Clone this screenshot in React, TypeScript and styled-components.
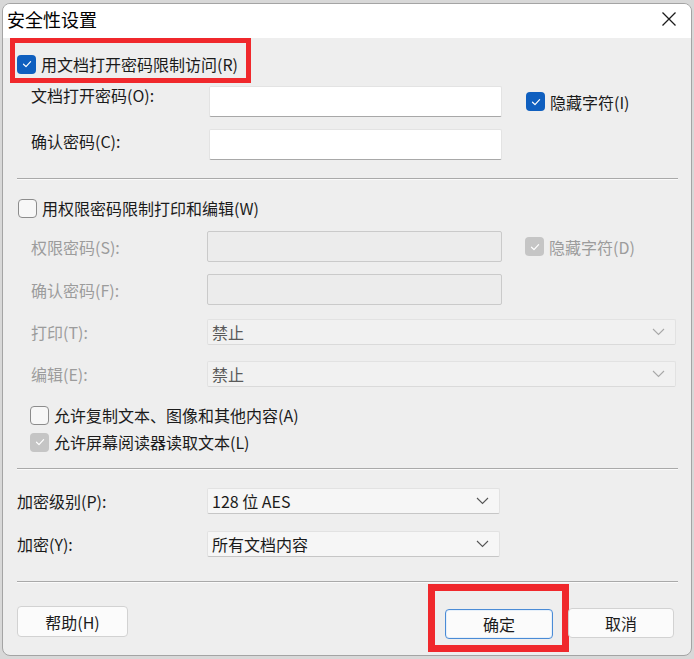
import React from "react";
import styled, { createGlobalStyle, css } from "styled-components";

const GlobalStyle = createGlobalStyle`
  html, body { margin: 0; padding: 0; }
  body {
    width: 694px;
    height: 659px;
    overflow: hidden;
    background: #d8d8d8;
    font-family: "Noto Sans CJK SC", "Microsoft YaHei", sans-serif;
    color: #1b1b1b;
  }
`;

const Window = styled.div`
  box-sizing: border-box;
  margin: 3px 0 0 2px;
  width: 690px;
  height: 653px;
  border: 1px solid #a4a4a4;
  border-radius: 8px;
  background: #eeeeee;
  overflow: hidden;
  display: flex;
  flex-direction: column;
`;

const TitleBar = styled.div`
  box-sizing: border-box;
  flex-shrink: 0;
  height: 34px;
  background: #ffffff;
  display: flex;
  align-items: center;
  justify-content: space-between;
  padding: 0 14px 5px 4px;
`;

const Title = styled.span`
  font-size: 18px;
  color: #000;
`;

const CloseIcon = styled.svg`
  width: 16px;
  height: 16px;
`;

const Body = styled.div`
  flex: 1;
  display: flex;
  flex-direction: column;
  padding: 0 13px 0 14px;
`;

/* red annotation frame drawn round a control */
const Highlight = styled.div<{
  $w: number;
  $h: number;
  $bw: number;
  $pt: number;
  $pl: number;
  $mt?: number;
  $ml?: number;
}>`
  box-sizing: border-box;
  width: ${(p) => p.$w}px;
  height: ${(p) => p.$h}px;
  border: ${(p) => p.$bw}px solid #f0282c;
  margin-top: ${(p) => p.$mt ?? 0}px;
  margin-left: ${(p) => p.$ml ?? 0}px;
  padding: ${(p) => p.$pt}px 0 0 ${(p) => p.$pl}px;
  display: flex;
  align-items: flex-start;
`;

const CheckRow = styled.label<{ $mt?: number; $ml?: number }>`
  display: flex;
  align-items: center;
  gap: 5px;
  margin-top: ${(p) => p.$mt ?? 0}px;
  margin-left: ${(p) => p.$ml ?? 0}px;
  font-size: 16px;
  line-height: 20px;
`;

type BoxState = "on" | "off" | "dimOn";

const Box = styled.span<{ $state: BoxState }>`
  box-sizing: border-box;
  width: 19px;
  height: 19px;
  border-radius: 4px;
  flex-shrink: 0;
  display: flex;
  align-items: center;
  justify-content: center;
  ${(p) =>
    p.$state === "on"
      ? css`
          background: #0f5fbf;
        `
      : p.$state === "dimOn"
      ? css`
          background: #c5c5c5;
        `
      : css`
          background: #f7f7f7;
          border: 1px solid #8c8c8c;
        `}
`;

const Text = styled.span<{ $dim?: boolean }>`
  color: ${(p) => (p.$dim ? "#9c9c9c" : "#1b1b1b")};
  white-space: nowrap;
`;

const Label = styled(Text)<{ $top?: number }>`
  ${(p) =>
    p.$top !== undefined &&
    css`
      align-self: start;
      margin-top: ${p.$top}px;
    `}
`;

const Row = styled.div<{ $mt: number; $indent: number }>`
  display: grid;
  grid-template-columns: ${(p) => 190 - p.$indent}px 1fr;
  align-items: center;
  margin-top: ${(p) => p.$mt}px;
  padding-left: ${(p) => p.$indent}px;
  font-size: 16px;
  line-height: 22px;
`;

const FieldGroup = styled.div`
  display: flex;
  align-items: center;
`;

type FieldKind = "edit" | "dimEdit" | "select" | "dimSelect";

const Field = styled.div<{ $w: number; $h: number; $kind: FieldKind; $ml?: number }>`
  box-sizing: border-box;
  width: ${(p) => p.$w}px;
  height: ${(p) => p.$h}px;
  margin-left: ${(p) => p.$ml ?? 0}px;
  display: flex;
  align-items: center;
  justify-content: space-between;
  padding: 0 10px 0 4px;
  border-radius: 2px;
  font-size: 16px;
  ${(p) =>
    p.$kind === "edit"
      ? css`
          background: #ffffff;
          border: 1px solid #e3e3e3;
          border-bottom: 1px solid #a8a8a8;
        `
      : p.$kind === "dimEdit"
      ? css`
          background: #ececec;
          border: 1px solid #cacaca;
        `
      : p.$kind === "select"
      ? css`
          background: #f6f6f6;
          border: 1px solid #e2e2e2;
          border-bottom: 1px solid #c6c6c6;
          color: #1b1b1b;
        `
      : css`
          background: #f1f1f1;
          border: 1px solid #e2e2e2;
          border-bottom: 1px solid #dadada;
          color: #5a5a5a;
        `}
`;

const Chevron = styled.svg`
  width: 13px;
  height: 8px;
`;

const Divider = styled.div<{ $mt: number }>`
  height: 1px;
  margin-top: ${(p) => p.$mt}px;
  background: #a9a9a9;
  border-bottom: 1px solid #fafafa;
`;

const Footer = styled.div`
  display: flex;
  align-items: flex-start;
`;

const Button = styled.button<{ $w: number; $h: number; $focus?: boolean; $mt?: number; $ml?: number }>`
  box-sizing: border-box;
  width: ${(p) => p.$w}px;
  height: ${(p) => p.$h}px;
  margin-top: ${(p) => p.$mt ?? 0}px;
  margin-left: ${(p) => p.$ml ?? 0}px;
  font-family: inherit;
  font-size: 16px;
  color: #1b1b1b;
  background: #fbfbfb;
  border-radius: 4px;
  padding: 0;
  border: 1px solid ${(p) => (p.$focus ? "#4a8bd6" : "#d2d2d2")};
  ${(p) =>
    p.$focus &&
    css`
      box-shadow: inset 0 0 0 1px #e6f0fa;
    `}
`;

const Check = ({ state }: { state: BoxState }) => (
  <Box $state={state}>
    {state !== "off" && (
      <svg width="12" height="12" viewBox="0 0 12 12">
        <path
          d="M2.5 6.2 L5 8.6 L9.6 3.6"
          fill="none"
          stroke="#fff"
          strokeWidth="1.2"
          strokeLinecap="round"
          strokeLinejoin="round"
        />
      </svg>
    )}
  </Box>
);

const Down = ({ dim }: { dim?: boolean }) => (
  <Chevron viewBox="0 0 13 8">
    <path d="M1 1 L6.5 6.5 L12 1" fill="none" stroke={dim ? "#a8a8a8" : "#555"} strokeWidth="1.1" />
  </Chevron>
);

export default function App() {
  return (
    <>
      <GlobalStyle />
      <Window>
        <TitleBar>
          <Title>安全性设置</Title>
          <CloseIcon viewBox="0 0 16 16">
            <path d="M1.5 1.5 L14.5 14.5 M14.5 1.5 L1.5 14.5" stroke="#1b1b1b" strokeWidth="1.3" />
          </CloseIcon>
        </TitleBar>
        <Body>
          <Highlight $w={241} $h={45} $bw={5} $pt={11} $pl={2} $ml={-7}>
            <CheckRow>
              <Check state="on" />
              <Text>用文档打开密码限制访问(R)</Text>
            </CheckRow>
          </Highlight>

          <Row $mt={3} $indent={14}>
            <Label $top={-2}>文档打开密码(O):</Label>
            <FieldGroup>
              <Field $kind="edit" $w={293} $h={31} $ml={2} />
              <CheckRow $ml={24}>
                <Check state="on" />
                <Text>隐藏字符(I)</Text>
              </CheckRow>
            </FieldGroup>
          </Row>

          <Row $mt={12} $indent={14}>
            <Label $top={1}>确认密码(C):</Label>
            <Field $kind="edit" $w={293} $h={31} $ml={2} />
          </Row>

          <Divider $mt={18} />

          <CheckRow $mt={18} $ml={1}>
            <Check state="off" />
            <Text>用权限密码限制打印和编辑(W)</Text>
          </CheckRow>

          <Row $mt={13} $indent={14}>
            <Label $dim>权限密码(S):</Label>
            <FieldGroup>
              <Field $kind="dimEdit" $w={295} $h={31} />
              <CheckRow $ml={23}>
                <Check state="dimOn" />
                <Text $dim>隐藏字符(D)</Text>
              </CheckRow>
            </FieldGroup>
          </Row>

          <Row $mt={12} $indent={14}>
            <Label $dim>确认密码(F):</Label>
            <Field $kind="dimEdit" $w={295} $h={31} />
          </Row>

          <Row $mt={14} $indent={14}>
            <Label $dim>打印(T):</Label>
            <Field $kind="dimSelect" $w={469} $h={26}>
              禁止
              <Down dim />
            </Field>
          </Row>

          <Row $mt={16} $indent={14}>
            <Label $dim>编辑(E):</Label>
            <Field $kind="dimSelect" $w={469} $h={26}>
              禁止
              <Down dim />
            </Field>
          </Row>

          <CheckRow $mt={18} $ml={13}>
            <Check state="off" />
            <Text>允许复制文本、图像和其他内容(A)</Text>
          </CheckRow>

          <CheckRow $mt={7} $ml={13}>
            <Check state="dimOn" />
            <Text>允许屏幕阅读器读取文本(L)</Text>
          </CheckRow>

          <Divider $mt={16} />

          <Row $mt={18} $indent={0}>
            <Label>加密级别(P):</Label>
            <Field $kind="select" $w={293} $h={26}>
              128 位 AES
              <Down />
            </Field>
          </Row>

          <Row $mt={17} $indent={0}>
            <Label>加密(Y):</Label>
            <Field $kind="select" $w={293} $h={26}>
              所有文档内容
              <Down />
            </Field>
          </Row>

          <Divider $mt={24} />

          <Footer>
            <Button $w={111} $h={31} $mt={23}>帮助(H)</Button>
            <Highlight $w={141} $h={68} $bw={7} $pt={18} $pl={10} $mt={1} $ml={300}>
              <Button $w={108} $h={30} $focus>确定</Button>
            </Highlight>
            <Button $w={106} $h={30} $mt={25} $ml={-1}>取消</Button>
          </Footer>
        </Body>
      </Window>
    </>
  );
}
